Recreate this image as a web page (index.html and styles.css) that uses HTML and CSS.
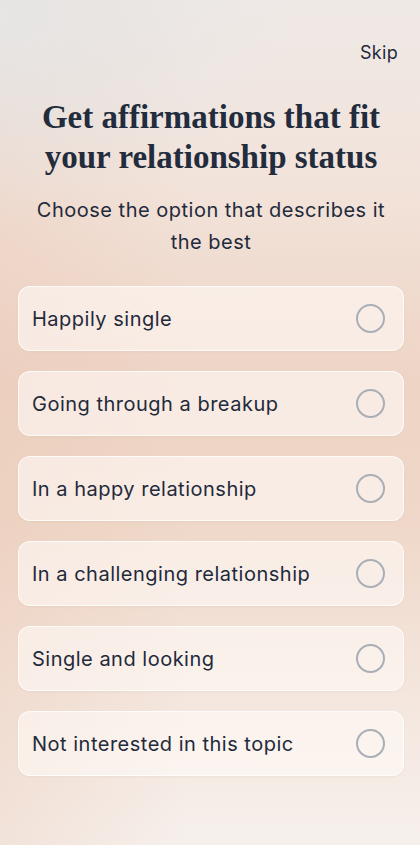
FILE: index.html
```html
<!DOCTYPE html>
<html lang="en">
<head>
<meta charset="utf-8">
<title>Relationship status</title>
<link rel="stylesheet" href="styles.css">
</head>
<body>
<main class="screen">
  <header class="topbar">
    <span class="skip">Skip</span>
  </header>
  <h1 class="title">Get affirmations that fit your relationship status</h1>
  <p class="subtitle">Choose the option that describes it the best</p>
  <ul class="options">
    <li class="option"><span class="label">Happily single</span><span class="radio"></span></li>
    <li class="option"><span class="label">Going through a breakup</span><span class="radio"></span></li>
    <li class="option"><span class="label">In a happy relationship</span><span class="radio"></span></li>
    <li class="option"><span class="label">In a challenging relationship</span><span class="radio"></span></li>
    <li class="option"><span class="label">Single and looking</span><span class="radio"></span></li>
    <li class="option"><span class="label">Not interested in this topic</span><span class="radio"></span></li>
  </ul>
</main>
</body>
</html>
```
FILE: styles.css
```css
* { box-sizing: border-box; }
html, body { margin: 0; padding: 0; }
body {
  width: 420px;
  height: 845px;
  overflow: hidden;
  color: #1f2a3b;
  font-family: Inter, "Open Sans", sans-serif;
  background:
    radial-gradient(ellipse 70% 25% at 0% 2%, rgba(230,230,230,0.95), rgba(230,230,230,0) 100%),
    linear-gradient(90deg, rgba(232,196,176,0.3) 0%, rgba(232,196,176,0) 45%, rgba(255,245,240,0) 100%),
    linear-gradient(180deg, #efe9e6 0%, #f2e3da 22%, #eed4c5 45%, #efd8c9 62%, #f4e6dd 82%, #f6f0ec 100%);
}
.screen {
  display: flex;
  flex-direction: column;
  padding: 0 16px 0 18px;
  height: 845px;
}
.topbar {
  display: flex;
  justify-content: flex-end;
  padding: 41px 6px 0 0;
  height: 66px;
}
.skip {
  font-size: 18px;
  line-height: 24px;
  letter-spacing: 0.3px;
  color: #1f2a3b;
}
.title {
  margin: 31px 0 0;
  font-family: "Liberation Serif", "DejaVu Serif", serif;
  font-weight: 700;
  font-size: 33px;
  line-height: 40px;
  text-align: center;
  padding: 0 18px;
  color: #222c3c;
}
.subtitle {
  margin: 17px 0 0;
  font-size: 20px;
  line-height: 32px;
  letter-spacing: 0.5px;
  text-align: center;
  padding: 0 12px;
  color: #1f2a3b;
}
.options {
  list-style: none;
  margin: 28px 0 0;
  padding: 0;
  display: flex;
  flex-direction: column;
  gap: 20px;
}
.option {
  height: 65px;
  display: flex;
  align-items: center;
  justify-content: space-between;
  padding: 0 18px 0 13px;
  border-radius: 12px;
  background: rgba(255,250,247,0.6);
  border: 1px solid rgba(255,255,255,0.75);
  box-shadow: 0 1px 2px rgba(200,170,150,0.15);
}
.label {
  font-size: 20px;
  letter-spacing: 0.5px;
  color: #1f2a3b;
}
.radio {
  width: 29px;
  height: 29px;
  border-radius: 50%;
  border: 2px solid #a9aeb7;
}
```
